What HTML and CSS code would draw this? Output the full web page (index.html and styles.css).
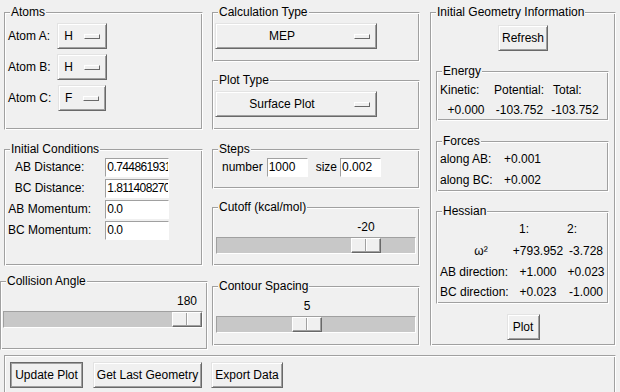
FILE: index.html
```html
<!DOCTYPE html>
<html>
<head>
<meta charset="utf-8">
<link rel="stylesheet" href="styles.css">
</head>
<body>
<div class="main">
  <div class="col col1">
    <section class="frame atoms">
      <div class="legend">Atoms</div>
      <div class="atom-grid">
        <span>Atom A:</span><div class="mb"><span class="mb-text">H</span><i class="ind"></i></div>
        <span>Atom B:</span><div class="mb"><span class="mb-text">H</span><i class="ind"></i></div>
        <span>Atom C:</span><div class="mb"><span class="mb-text">F</span><i class="ind"></i></div>
      </div>
    </section>
    <section class="frame ic">
      <div class="legend">Initial Conditions</div>
      <div class="ic-grid">
        <span>AB Distance:</span><div class="entry">0.744861931</div>
        <span>BC Distance:</span><div class="entry">1.811408270</div>
        <span>AB Momentum:</span><div class="entry">0.0</div>
        <span>BC Momentum:</span><div class="entry">0.0</div>
      </div>
    </section>
    <section class="frame ca">
      <div class="legend">Collision Angle</div>
      <div class="scale sc-ca">
        <div class="scale-value"><span style="width:168px"></span><span class="val">180</span></div>
        <div class="trough"><span style="width:168px"></span><span class="slider"></span></div>
      </div>
    </section>
  </div>

  <div class="col col2">
    <section class="frame calc">
      <div class="legend">Calculation Type</div>
      <div class="mb wide"><span class="mb-text">MEP</span><i class="ind"></i></div>
    </section>
    <section class="frame plot">
      <div class="legend">Plot Type</div>
      <div class="mb wide"><span class="mb-text">Surface Plot</span><i class="ind"></i></div>
    </section>
    <section class="frame steps">
      <div class="legend">Steps</div>
      <div class="steps-row">
        <span class="st-lbl">number</span><div class="entry short">1000</div>
        <span class="st-lbl size">size</span><div class="entry short">0.002</div>
      </div>
    </section>
    <section class="frame cutoff">
      <div class="legend">Cutoff (kcal/mol)</div>
      <div class="scale">
        <div class="scale-value"><span style="width:134px"></span><span class="val">-20</span></div>
        <div class="trough"><span style="width:134px"></span><span class="slider"></span></div>
      </div>
    </section>
    <section class="frame contour">
      <div class="legend">Contour Spacing</div>
      <div class="scale">
        <div class="scale-value"><span style="width:75px"></span><span class="val">5</span></div>
        <div class="trough"><span style="width:75px"></span><span class="slider"></span></div>
      </div>
    </section>
  </div>

  <div class="col col3">
    <section class="frame geo">
      <div class="legend">Initial Geometry Information</div>
      <div class="btn refresh">Refresh</div>
      <section class="frame sub energy">
        <div class="legend">Energy</div>
        <div class="en-grid">
          <span class="h">Kinetic:</span><span class="h h2">Potential:</span><span class="h h3">Total:</span>
          <span class="v">+0.000</span><span class="v">-103.752</span><span class="v">-103.752</span>
        </div>
      </section>
      <section class="frame sub forces">
        <div class="legend">Forces</div>
        <div class="fo-grid">
          <span>along AB:</span><span>+0.001</span>
          <span>along BC:</span><span>+0.002</span>
        </div>
      </section>
      <section class="frame sub hessian">
        <div class="legend">Hessian</div>
        <div class="he-grid">
          <span></span><span class="h">1:</span><span class="h">2:</span>
          <span class="omega">ω²</span><span class="v">+793.952</span><span class="v">-3.728</span>
          <span>AB direction:</span><span class="v">+1.000</span><span class="v">+0.023</span>
          <span>BC direction:</span><span class="v">+0.023</span><span class="v">-1.000</span>
        </div>
      </section>
      <div class="btn plotbtn">Plot</div>
    </section>
  </div>
</div>
<div class="bottom">
  <div class="btn default update">Update Plot</div>
  <div class="btn lastgeo">Get Last Geometry</div>
  <div class="btn export">Export Data</div>
</div>
</body>
</html>
```

FILE: styles.css
```css
html, body {
  margin: 0;
  padding: 0;
}
body {
  width: 620px;
  height: 392px;
  overflow: hidden;
  background: #f0f0f0;
  color: #000;
  font-family: "Liberation Sans", Arial, sans-serif;
  font-size: 12px;
  line-height: 15px;
}
.main {
  display: flex;
  height: 355px;
  padding-top: 12px;
  box-sizing: border-box;
}
.col {
  display: flex;
  flex-direction: column;
  align-items: flex-start;
}
.col1 { width: 208px; }
.col2 { width: 208px; margin-left: 4px; }
.col3 { width: 186px; margin-left: 10px; }

/* group frame (groove) */
.frame {
  box-sizing: border-box;
  display: flex;
  flex-direction: column;
  align-items: flex-start;
  border: 1px solid;
  border-color: #a0a0a0 #fff #fff #a0a0a0;
  box-shadow: inset 1px 1px #fff, inset -1px -1px #a0a0a0;
}
.legend {
  margin: -8px 0 0 5px;
  padding: 0 1px;
  background: #f0f0f0;
  line-height: 15px;
  white-space: nowrap;
}

.atoms { margin-left: 4px; width: 199px; height: 118px; }
.ic { margin-left: 4px; margin-top: 19px; width: 199px; height: 117px; }
.ca { margin-top: 15px; width: 208px; height: 69px; }

.calc { width: 208px; height: 50px; }
.plot { width: 208px; height: 50px; margin-top: 18px; }
.steps { width: 208px; height: 40px; margin-top: 19px; }
.cutoff { width: 208px; height: 59px; margin-top: 18px; }
.contour { width: 208px; height: 60px; margin-top: 20px; }

.geo { width: 186px; height: 334px; }

/* raised widgets */
.mb, .btn {
  box-sizing: border-box;
  display: flex;
  align-items: center;
  height: 26px;
  border: 1px solid;
  border-color: #e3e3e3 #696969 #696969 #e3e3e3;
  box-shadow: inset 1px 1px #fff, inset -1px -1px #a0a0a0;
  background: #f0f0f0;
  white-space: nowrap;
}
.ind {
  display: block;
  box-sizing: border-box;
  width: 16px;
  height: 5px;
  border: 1px solid;
  border-color: #fff #696969 #696969 #fff;
  background: #f0f0f0;
}

/* atoms */
.atom-grid {
  display: grid;
  grid-template-columns: auto auto;
  column-gap: 6px;
  row-gap: 5px;
  align-items: center;
  justify-items: center;
  padding: 3px 0 0 3px;
}
.atom-grid > span { justify-self: start; }
.mb { padding: 0 6px 0 6px; }
.mb .ind { margin-left: 11px; }

.mb.wide {
  width: 162px;
  margin: 3px 0 0 2px;
  padding: 0 6px 0 0;
}
.mb.wide .mb-text { flex: 1; text-align: center; }
.mb.wide .ind { margin-left: 6px; }

/* entries */
.entry {
  box-sizing: border-box;
  height: 19px;
  width: 64px;
  padding-left: 1px;
  background: #fff;
  border: 1px solid;
  border-color: #a0a0a0 #fff #fff #a0a0a0;
  line-height: 17px;
  letter-spacing: -0.6px;
  overflow: hidden;
  white-space: nowrap;
}
.entry.short { width: 41px; letter-spacing: 0; }

.ic-grid {
  display: grid;
  grid-template-columns: auto 64px;
  column-gap: 14px;
  row-gap: 2px;
  align-items: center;
  justify-items: center;
  padding: 1px 0 0 3px;
}

.steps-row {
  display: flex;
  align-items: center;
  margin: 1px 0 0 9px;
}
.st-lbl { margin-right: 4px; }
.st-lbl.size { margin-left: 8px; margin-right: 3px; }

/* scales */
.scale { margin: 5px 0 0 3px; }
.sc-ca { margin-left: 2px; }
.scale-value {
  display: flex;
  height: 15px;
  padding-left: 1px;
}
.scale-value .val {
  width: 30px;
  text-align: center;
}
.trough {
  display: flex;
  box-sizing: border-box;
  width: 200px;
  height: 17px;
  margin-top: 2px;
  border: 1px solid;
  border-color: #a0a0a0 #fff #fff #a0a0a0;
  background: #c8c8c8;
}
.trough > span { flex: none; }
.slider {
  box-sizing: border-box;
  width: 30px;
  height: 15px;
  border: 1px solid;
  border-color: #fff #696969 #696969 #fff;
  box-shadow: inset -1px -1px #a0a0a0;
  background: linear-gradient(to right, transparent 13px, #a0a0a0 13px, #a0a0a0 14px, #fff 14px, #fff 15px, transparent 15px), #f0f0f0;
}

/* buttons */
.btn { justify-content: center; }
.refresh { width: 50px; margin-top: 5px; align-self: center; }
.plotbtn { width: 33px; margin-top: 10px; align-self: center; }

/* geometry info sub frames */
.sub { margin-left: 5px; width: 173px; }
.energy { height: 50px; margin-top: 20px; }
.forces { height: 51px; margin-top: 20px; }
.hessian { height: 93px; margin-top: 19px; }

.en-grid {
  display: grid;
  grid-template-columns: 52px 55px 56px;
  grid-auto-rows: 20px;
  align-items: center;
  padding: 1px 0 0 3px;
}
.en-grid .h { justify-self: start; }
.en-grid .h2 { margin-left: 2px; }
.en-grid .h3 { margin-left: 6px; }
.en-grid .v { justify-self: center; }

.fo-grid {
  display: grid;
  grid-template-columns: 64px auto;
  grid-auto-rows: 21px;
  align-items: center;
  padding-left: 3px;
}

.he-grid {
  display: grid;
  grid-template-columns: 74px 48px 48px;
  grid-template-rows: 21px 22px 20px 21px;
  align-items: center;
  padding-left: 3px;
  white-space: nowrap;
}
.he-grid .h { justify-self: start; margin-left: 5px; }
.he-grid .v { justify-self: center; }
.he-grid .omega { justify-self: center; padding-left: 8px; }

/* bottom bar */
.bottom {
  display: flex;
  align-items: flex-start;
  box-sizing: border-box;
  margin-left: 4px;
  width: 612px;
  height: 37px;
  padding: 6px 0 0 5px;
  border: 1px solid;
  border-bottom: 0;
  border-color: #a0a0a0 #fff #fff #a0a0a0;
  box-shadow: inset 1px 1px #fff, inset -1px 0 #a0a0a0;
}
.bottom .btn { height: 26px; }
.update { width: 73px; }
.lastgeo { width: 109px; margin-left: 10px; }
.export { width: 72px; margin-left: 9px; }
.btn.default {
  border-color: #696969;
  box-shadow: inset 1px 1px #a0a0a0, inset -1px -1px #a0a0a0;
}
```
